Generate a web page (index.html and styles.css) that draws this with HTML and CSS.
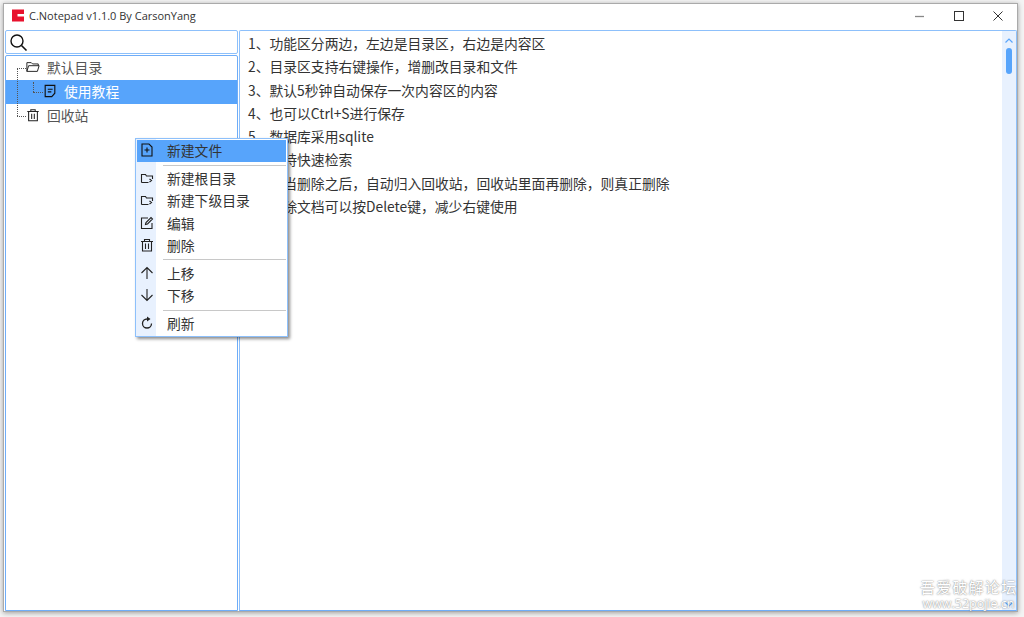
FILE: index.html
```html
<!DOCTYPE html>
<html lang="zh">
<head>
<meta charset="utf-8">
<title>C.Notepad</title>
<link rel="stylesheet" href="styles.css">
</head>
<body>
<div class="window">
  <header class="titlebar">
    <svg class="logo" viewBox="0 0 12 12"><path fill="#e8112d" d="M0 0h12v4.500H5.500v2.500H12v5H0z"/></svg>
    <span class="title">C.Notepad v1.1.0 By CarsonYang</span>
    <div class="controls">
      <svg class="ctl" viewBox="0 0 10 10"><path d="M0 5.500h9" stroke="#888" stroke-width="1.300"/></svg>
      <svg class="ctl" viewBox="0 0 10 10"><rect x=".5" y=".5" width="9" height="9" fill="none" stroke="#333" stroke-width="1"/></svg>
      <svg class="ctl" viewBox="0 0 10 10"><path d="M.5.500l9 9M9.500.500l-9 9" stroke="#333" stroke-width="1"/></svg>
    </div>
  </header>
  <div class="body">
    <aside class="side">
      <div class="search">
        <svg class="search-icon" viewBox="0 0 18 18"><circle cx="7" cy="7" r="6" fill="none" stroke="#111" stroke-width="1.400"/><path d="M11.500 11.500l5 5" stroke="#111" stroke-width="1.600"/></svg>
      </div>
      <div class="tree">
        <div class="row r1">
          <svg class="ico" viewBox="0 0 16 16"><path d="M1 13V3h5l1.500 1.500h6.500v2M1 13l2-6.500h12L13 13z" fill="none" stroke="#222" stroke-width="1.100"/></svg>
          <span>默认目录</span>
        </div>
        <div class="row r2 sel">
          <svg class="ico" viewBox="0 0 16 16"><path d="M2.500 1.500h11v9l-3.500 4h-7.500zM5.500 6h5.500M5.500 9h4" fill="none" stroke="#111" stroke-width="1.300"/></svg>
          <span>使用教程</span>
        </div>
        <div class="row r1">
          <svg class="ico" viewBox="0 0 16 16"><path d="M1.500 4h13M5.500 4V2h5v2M3 4v10.500h10V4M6.500 6.500v6M9.500 6.500v6" fill="none" stroke="#222" stroke-width="1.200"/></svg>
          <span>回收站</span>
        </div>
        <span class="dots d1"></span>
        <span class="dots d2"></span>
        <span class="dots d3"></span>
        <span class="dots d4"></span>
        <span class="dots d5"></span>
      </div>
    </aside>
    <main class="content">
      <div class="text">
        <p>1、功能区分两边，左边是目录区，右边是内容区</p>
        <p>2、目录区支持右键操作，增删改目录和文件</p>
        <p>3、默认5秒钟自动保存一次内容区的内容</p>
        <p>4、也可以Ctrl+S进行保存</p>
        <p>5、数据库采用sqlite</p>
        <p>6、支持快速检索</p>
        <p>7、每当删除之后，自动归入回收站，回收站里面再删除，则真正删除</p>
        <p>8、删除文档可以按Delete键，减少右键使用</p>
      </div>
      <div class="scrollbar">
        <svg class="arrow" viewBox="0 0 8 5"><path d="M.5 4.500L4 1l3.500 3.500" fill="none" stroke="#5aa5fb" stroke-width="1.200"/></svg>
        <div class="thumb"></div>
        <svg class="arrow bottom" viewBox="0 0 8 5"><path d="M.5.500L4 4l3.500-3.500" fill="none" stroke="#5aa5fb" stroke-width="1.200"/></svg>
      </div>
    </main>
  </div>
</div>
<nav class="menu">
  <div class="item active"><svg class="mi" viewBox="0 0 14 14"><path d="M2 1h7l3 3v9H2zM7 4.500v5M4.500 7h5" fill="none" stroke="#111" stroke-width="1.100"/></svg><span>新建文件</span></div>
  <div class="sep first"></div>
  <div class="item"><svg class="mi" viewBox="0 0 14 14"><path d="M1.500 11.500v-8h4l1 1.500h6v3M1.500 11.500h7M9.500 11l2-1.500-2-1.500" fill="none" stroke="#222" stroke-width="1.100"/></svg><span>新建根目录</span></div>
  <div class="item"><svg class="mi" viewBox="0 0 14 14"><path d="M1.500 11.500v-8h4l1 1.500h6v3M1.500 11.500h7M9.500 11l2-1.500-2-1.500" fill="none" stroke="#222" stroke-width="1.100"/></svg><span>新建下级目录</span></div>
  <div class="item"><svg class="mi" viewBox="0 0 14 14"><path d="M12 7v5.500H1.500V2H8M5.500 8.500l.5-2L11 1.500l1.500 1.500-5 5z" fill="none" stroke="#222" stroke-width="1.100"/></svg><span>编辑</span></div>
  <div class="item"><svg class="mi" viewBox="0 0 14 14"><path d="M1 3.500h12M4.500 3.500V1.500h5v2M2.500 3.500v9.500h9V3.500M5.500 5.500v5.500M8.500 5.500v5.500" fill="none" stroke="#222" stroke-width="1.100"/></svg><span>删除</span></div>
  <div class="sep"></div>
  <div class="item"><svg class="mi" viewBox="0 0 14 14"><path d="M7 13V1.500M1.500 7L7 1.500 12.500 7" fill="none" stroke="#222" stroke-width="1.100"/></svg><span>上移</span></div>
  <div class="item"><svg class="mi" viewBox="0 0 14 14"><path d="M7 1v11.500M1.500 7L7 12.500 12.500 7" fill="none" stroke="#222" stroke-width="1.100"/></svg><span>下移</span></div>
  <div class="sep"></div>
  <div class="item"><svg class="mi" viewBox="0 0 14 14"><path d="M11.500 7.500A4.500 4.500 0 1 1 7 3" fill="none" stroke="#222" stroke-width="1.300"/><path d="M7 .5v5l3.500-2.500z" fill="#222"/></svg><span>刷新</span></div>
</nav>
<div class="watermark"><div class="wm1">吾爱破解论坛</div><div class="wm2">www.52pojie.cn</div></div>
</body>
</html>
```

FILE: styles.css
```css
* { box-sizing: border-box; }
html, body { margin: 0; height: 100%; }
body {
  background: #f4f4f4;
  font-family: "Noto Sans CJK SC", "Noto Sans", sans-serif;
  color: #333;
  overflow: hidden;
  padding: 3px 6px 5px 3px;
}
p { margin: 0; }
.window {
  height: 100%;
  background: #fff;
  border: 1px solid #aaa;
  box-shadow: 0 1px 5px rgba(0,0,0,.35);
  display: flex;
  flex-direction: column;
}
.titlebar {
  height: 26px;
  flex: none;
  display: flex;
  align-items: center;
  padding: 0 0 3px 8px;
}
.logo { width: 12px; height: 13px; margin-right: 5px; }
.title { font-size: 11px; color: #333; font-family: "Open Sans", "Noto Sans", sans-serif; }
.controls { margin-left: auto; display: flex; align-items: center; gap: 29px; padding-right: 14px; }
.ctl { width: 10px; height: 10px; display: block; }
.body { flex: 1; min-height: 0; display: flex; gap: 1px; padding-left: 1px; }
.side { width: 233px; flex: none; display: flex; flex-direction: column; gap: 1px; }
.search {
  height: 24px;
  border: 1px solid #8dc0fb;
  border-radius: 2px;
  padding: 3px 0 0 3.500px;
}
.search-icon { width: 18px; height: 18px; display: block; }
.tree {
  flex: 1;
  border: 1px solid #6fadf8;
  border-radius: 2px 2px 0 0;
  position: relative;
}
.row { height: 24px; padding-bottom: 2px; display: flex; align-items: center; font-size: 13.800px; color: #555; }
.r1 { padding-left: 20px; }
.r2 { padding-left: 37px; }
.sel { background: #57a4fb; color: #fff; }
.row .ico { width: 14px; height: 14px; margin-right: 7px; flex: none; }
.dots { position: absolute; border: 0 dotted #555; }
.d1 { left: 11px; top: 12px; width: 9px; border-top-width: 1px; }
.d2 { left: 11px; top: 12px; height: 48px; border-left-width: 1px; }
.d3 { left: 11px; top: 60px; width: 9px; border-top-width: 1px; }
.d4 { left: 27px; top: 26px; height: 10px; border-left-width: 1px; }
.d5 { left: 27px; top: 36px; width: 10px; border-top-width: 1px; }
.content {
  flex: 1;
  min-width: 0;
  display: flex;
  border: 1px solid #8dc0fb;
  border-bottom-color: #6fadf8;
  border-radius: 2px 2px 0 0;
}
.text { flex: 1; padding: 1px 0 0 8px; font-size: 13.800px; line-height: 23.300px; color: #333; }
.scrollbar {
  width: 14px;
  flex: none;
  background: #e8f1fe;
  display: flex;
  flex-direction: column;
  align-items: center;
  padding: 7px 0 3px;
}
.arrow { width: 8px; height: 5px; flex: none; }
.arrow.bottom { margin-top: auto; }
.thumb { width: 5.500px; height: 26px; margin-top: 5px; border-radius: 3px; background: #57a4fb; }
.menu {
  position: absolute;
  left: 135px;
  top: 138px;
  width: 153px;
  background: linear-gradient(90deg, #e8f1fe 0, #e8f1fe 20px, #fff 20px);
  border: 1px solid #8dc0fb;
  box-shadow: 2px 2px 3px rgba(0,0,0,.45);
  padding: 1px;
}
.item { height: 22.300px; padding-bottom: 2px; display: flex; align-items: center; font-size: 13.800px; color: #333; }
.item.active { background: #57a4fb; }
.mi { width: 14px; height: 14px; margin: 0 13px 0 3px; flex: none; }
.sep { height: 1px; background: #c8c8c8; margin: 2.500px 0 2px 26px; }
.watermark {
  position: absolute;
  left: 920px;
  top: 578px;
  width: 97px;
  color: #fff;
  text-shadow: 0 0 2px rgba(90,90,90,.6), 0 0 1px rgba(90,90,90,.5);
  text-align: center;
}
.wm1 { font-size: 15px; line-height: 17px; letter-spacing: 1.200px; white-space: nowrap; }
.wm2 { font-size: 12.500px; line-height: 14px; margin-top: 2px; font-family: "Open Sans", sans-serif; white-space: nowrap; }
```
